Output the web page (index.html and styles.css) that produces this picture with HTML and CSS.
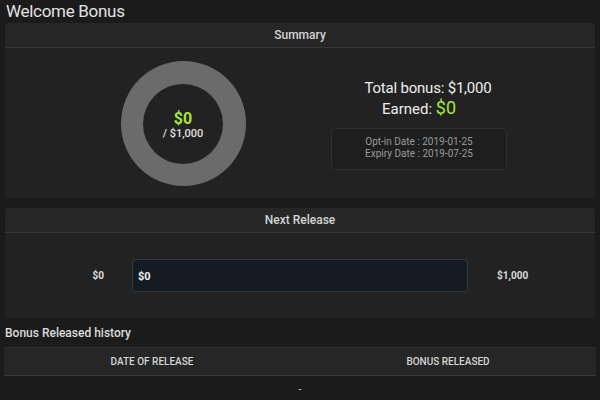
FILE: index.html
```html
<!DOCTYPE html>
<html lang="en">
<head>
    <meta charset="UTF-8">
    <title>Welcome Bonus</title>
    <link rel="stylesheet" href="styles.css">
</head>
<body>
    <h1>Welcome Bonus</h1>
    <div class="card summary">
        <div class="card-header">Summary</div>
        <div class="summary-body">
            <div class="donut-wrap">
                <div class="donut">
                    <div class="donut-hole">
                        <span class="green donut-value">$0</span>
                        <span class="donut-total">/ $1,000</span>
                    </div>
                </div>
            </div>
            <div class="totals">
                <div class="total-line">Total bonus: $1,000</div>
                <div class="earned-line">Earned: <span class="green earned-value">$0</span></div>
                <div class="dates">
                    <div>Opt-in Date : 2019-01-25</div>
                    <div>Expiry Date : 2019-07-25</div>
                </div>
            </div>
        </div>
    </div>
    <div class="card release">
        <div class="card-header">Next Release</div>
        <div class="release-body">
            <span class="release-min">$0</span>
            <div class="release-bar">$0</div>
            <span class="release-max">$1,000</span>
        </div>
    </div>
    <h2>Bonus Released history</h2>
    <table>
        <thead>
            <tr>
                <th>DATE OF RELEASE</th>
                <th>BONUS RELEASED</th>
            </tr>
        </thead>
        <tbody>
            <tr>
                <td colspan="2">-</td>
            </tr>
        </tbody>
    </table>
</body>
</html>
```
FILE: styles.css
```css
body {
    font-family: Roboto, "Liberation Sans", sans-serif;
    background-color: #1b1b1b;
    color: #ddd;
    margin: 0;
    padding: 0 5px;
}
h1 {
    font-size: 17px;
    font-weight: normal;
    margin: 0;
    padding: 1px 1px 0;
    height: 22px;
    color: #e2e2e2;
    letter-spacing: -0.3px;
}
.green {
    color: #a6e63a;
}
.card {
    background-color: #222;
    border-radius: 3px;
}
.card-header {
    background-color: #262626;
    border-bottom: 1px solid #363636;
    height: 24px;
    line-height: 24px;
    text-align: center;
    font-size: 12px;
    font-weight: 500;
    color: #d4d4d4;
    border-radius: 3px 3px 0 0;
}
.summary {
    height: 175px;
    margin-bottom: 10px;
}
.summary-body {
    display: flex;
    padding-top: 1px;
}
.donut-wrap {
    width: 356px;
    display: flex;
    justify-content: center;
    padding-top: 12px;
}
.donut {
    width: 125px;
    height: 125px;
    border-radius: 50%;
    background-color: #6b6b6b;
    display: flex;
    align-items: center;
    justify-content: center;
}
.donut-hole {
    width: 80px;
    height: 80px;
    box-sizing: border-box;
    border-radius: 50%;
    background-color: #222;
    display: flex;
    flex-direction: column;
    align-items: center;
    padding-top: 27px;
    line-height: 1;
}
.donut-value {
    font-size: 16px;
    font-weight: bold;
}
.donut-total {
    font-size: 11px;
    font-weight: 500;
    color: #e0e0e0;
    margin-top: 1px;
}
.totals {
    display: flex;
    flex-direction: column;
    align-items: center;
    width: 178px;
    margin-left: -31px;
    padding-top: 29px;
}
.total-line {
    font-size: 15px;
    color: #eee;
    line-height: 20px;
    padding-left: 18px;
    letter-spacing: -0.2px;
}
.earned-line {
    font-size: 15px;
    color: #eee;
    line-height: 20px;
}
.earned-value {
    font-size: 18px;
}
.dates {
    margin-top: 9px;
    width: 176px;
    height: 42px;
    box-sizing: border-box;
    background-color: #1e1e1e;
    border: 1px solid #2e2e2e;
    border-radius: 4px;
    text-align: center;
    font-size: 10px;
    line-height: 12px;
    color: #9a9a9a;
    padding-top: 7px;
}
.release {
    height: 110px;
}
.release-body {
    display: flex;
    align-items: center;
    height: 85px;
    font-size: 10px;
    font-weight: bold;
    color: #ddd;
}
.release-min {
    width: 99px;
    text-align: right;
    margin-right: 28px;
}
.release-bar {
    width: 336px;
    height: 33px;
    line-height: 33px;
    box-sizing: border-box;
    background-color: #151b22;
    border: 1px solid #33383d;
    border-radius: 3px;
    padding-left: 5px;
    font-size: 11px;
    color: #f2f2f2;
}
.release-max {
    margin-left: 29px;
}
h2 {
    font-size: 12px;
    font-weight: 500;
    color: #ddd;
    margin: 0;
    padding: 8px 0 0;
    height: 21px;
}
table {
    width: calc(100% + 2px);
    margin-left: -1px;
    border-collapse: collapse;
}
th {
    background-color: #262626;
    font-size: 10px;
    font-weight: 500;
    color: #d4d4d4;
    height: 25px;
    border-top: 1px solid #2e2e2e;
    border-bottom: 1px solid #3a3a3a;
    width: 50%;
}
td {
    text-align: center;
    height: 25px;
    font-size: 10px;
    border-bottom: 1px solid #333;
}
```
